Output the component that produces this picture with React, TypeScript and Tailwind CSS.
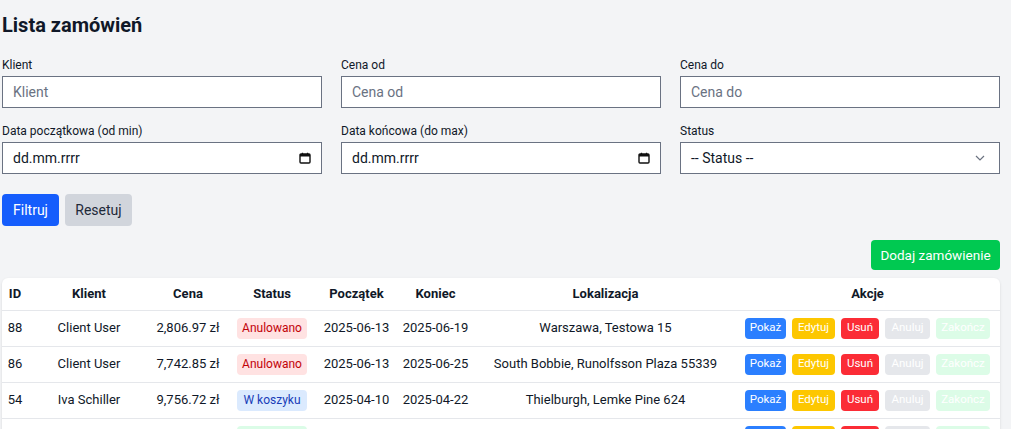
import React from 'react';

type Order = {
  id: number;
  client: string;
  price: string;
  status: 'Anulowano' | 'W koszyku' | 'Zakończone';
  start: string;
  end: string;
  location: string;
};

const orders: Order[] = [
  { id: 88, client: 'Client User', price: '2,806.97 zł', status: 'Anulowano', start: '2025-06-13', end: '2025-06-19', location: 'Warszawa, Testowa 15' },
  { id: 86, client: 'Client User', price: '7,742.85 zł', status: 'Anulowano', start: '2025-06-13', end: '2025-06-25', location: 'South Bobbie, Runolfsson Plaza 55339' },
  { id: 54, client: 'Iva Schiller', price: '9,756.72 zł', status: 'W koszyku', start: '2025-04-10', end: '2025-04-22', location: 'Thielburgh, Lemke Pine 624' },
  { id: 51, client: 'Client User', price: '4,120.00 zł', status: 'Zakończone', start: '2025-03-02', end: '2025-03-09', location: 'Kraków, Długa 7' },
];

const badge = {
  Anulowano: 'bg-red-100 text-red-700',
  'W koszyku': 'bg-blue-100 text-blue-800',
  'Zakończone': 'bg-green-100 text-green-800',
};

const Label = ({ children }: { children: React.ReactNode }) => (
  <label className="block h-4 text-[12px] leading-4 text-gray-900 mb-[3px]">{children}</label>
);

const boxClass = 'h-[32px] w-full border border-gray-500 bg-white px-[10px] text-[14px] flex items-center';

const CalendarIcon = () => (
  <svg width="12" height="12" viewBox="0 0 12 12" fill="none">
    <rect x="1" y="2" width="10" height="9" rx="1" stroke="#111" strokeWidth="1.4" />
    <rect x="1" y="2" width="10" height="2.5" fill="#111" />
    <path d="M3.5 0.8v2M8.5 0.8v2" stroke="#111" strokeWidth="1.2" />
  </svg>
);

const Chevron = () => (
  <svg width="10" height="6" viewBox="0 0 10 6" fill="none">
    <path d="M1 1l4 4 4-4" stroke="#6b7280" strokeWidth="1.2" />
  </svg>
);

const App = () => {
  return (
    <div className="h-[429px] overflow-hidden bg-gray-100 pl-[2px] pt-[11px] font-['Roboto',sans-serif] text-gray-900">
      <div className="w-[998px]">
        <h1 className="text-[20px] leading-7 font-bold">Lista zamówień</h1>

        <div className="mt-[18px] grid grid-cols-3 gap-x-[19px] gap-y-[15px]">
          <div>
            <Label>Klient</Label>
            <input className={boxClass + ' outline-none placeholder:text-gray-500'} placeholder="Klient" />
          </div>
          <div>
            <Label>Cena od</Label>
            <input className={boxClass + ' outline-none placeholder:text-gray-500'} placeholder="Cena od" />
          </div>
          <div>
            <Label>Cena do</Label>
            <input className={boxClass + ' outline-none placeholder:text-gray-500'} placeholder="Cena do" />
          </div>
          <div>
            <Label>Data początkowa (od min)</Label>
            <div className={boxClass + ' justify-between'}>
              <span>dd.mm.rrrr</span>
              <CalendarIcon />
            </div>
          </div>
          <div>
            <Label>Data końcowa (do max)</Label>
            <div className={boxClass + ' justify-between'}>
              <span>dd.mm.rrrr</span>
              <CalendarIcon />
            </div>
          </div>
          <div>
            <Label>Status</Label>
            <div className={boxClass + ' justify-between'}>
              <span>-- Status --</span>
              <span className="mr-[4px]"><Chevron /></span>
            </div>
          </div>
        </div>

        <div className="mt-[20px] flex gap-[6px]">
          <button className="h-[32px] w-[57px] rounded bg-blue-600 text-[14px] text-white">Filtruj</button>
          <button className="h-[32px] w-[67px] rounded bg-gray-300 text-[14px] text-gray-800">Resetuj</button>
        </div>

        <div className="mt-[14px] flex justify-end">
          <button className="h-[30px] w-[129px] rounded bg-green-500 text-[13.5px] text-white">Dodaj zamówienie</button>
        </div>

        <div className="mt-[8px] rounded-md bg-white shadow-sm">
          <table className="w-full table-fixed border-collapse text-[13px]">
            <colgroup>
              <col className="w-[26px]" />
              <col className="w-[122px]" />
              <col className="w-[76px]" />
              <col className="w-[92px]" />
              <col className="w-[77px]" />
              <col className="w-[81px]" />
              <col className="w-[259px]" />
              <col />
            </colgroup>
            <thead>
              <tr className="h-[32px] border-b border-gray-200 font-bold">
                <th>ID</th>
                <th>Klient</th>
                <th>Cena</th>
                <th>Status</th>
                <th>Początek</th>
                <th>Koniec</th>
                <th>Lokalizacja</th>
                <th>Akcje</th>
              </tr>
            </thead>
            <tbody>
              {orders.map((o) => (
                <tr key={o.id} className="h-[36px] border-b border-gray-200 text-center">
                  <td>{o.id}</td>
                  <td>{o.client}</td>
                  <td>{o.price}</td>
                  <td>
                    <span className={'inline-block h-[21px] w-[70px] rounded text-[12px] leading-[21px] ' + badge[o.status]}>{o.status}</span>
                  </td>
                  <td>{o.start}</td>
                  <td>{o.end}</td>
                  <td>{o.location}</td>
                  <td>
                    <div className="flex justify-center gap-[6px] text-[11.5px] text-white">
                      <button className="h-[21px] w-[41px] rounded bg-blue-500">Pokaż</button>
                      <button className="h-[21px] w-[43px] rounded bg-yellow-400">Edytuj</button>
                      <button className="h-[21px] w-[38px] rounded bg-red-500">Usuń</button>
                      <button className="h-[21px] w-[45px] rounded bg-[#e5e7eb]">Anuluj</button>
                      <button className="h-[21px] w-[54px] rounded bg-[#dcfce7]">Zakończ</button>
                    </div>
                  </td>
                </tr>
              ))}
            </tbody>
          </table>
        </div>
      </div>
    </div>
  );
};

export default App;
